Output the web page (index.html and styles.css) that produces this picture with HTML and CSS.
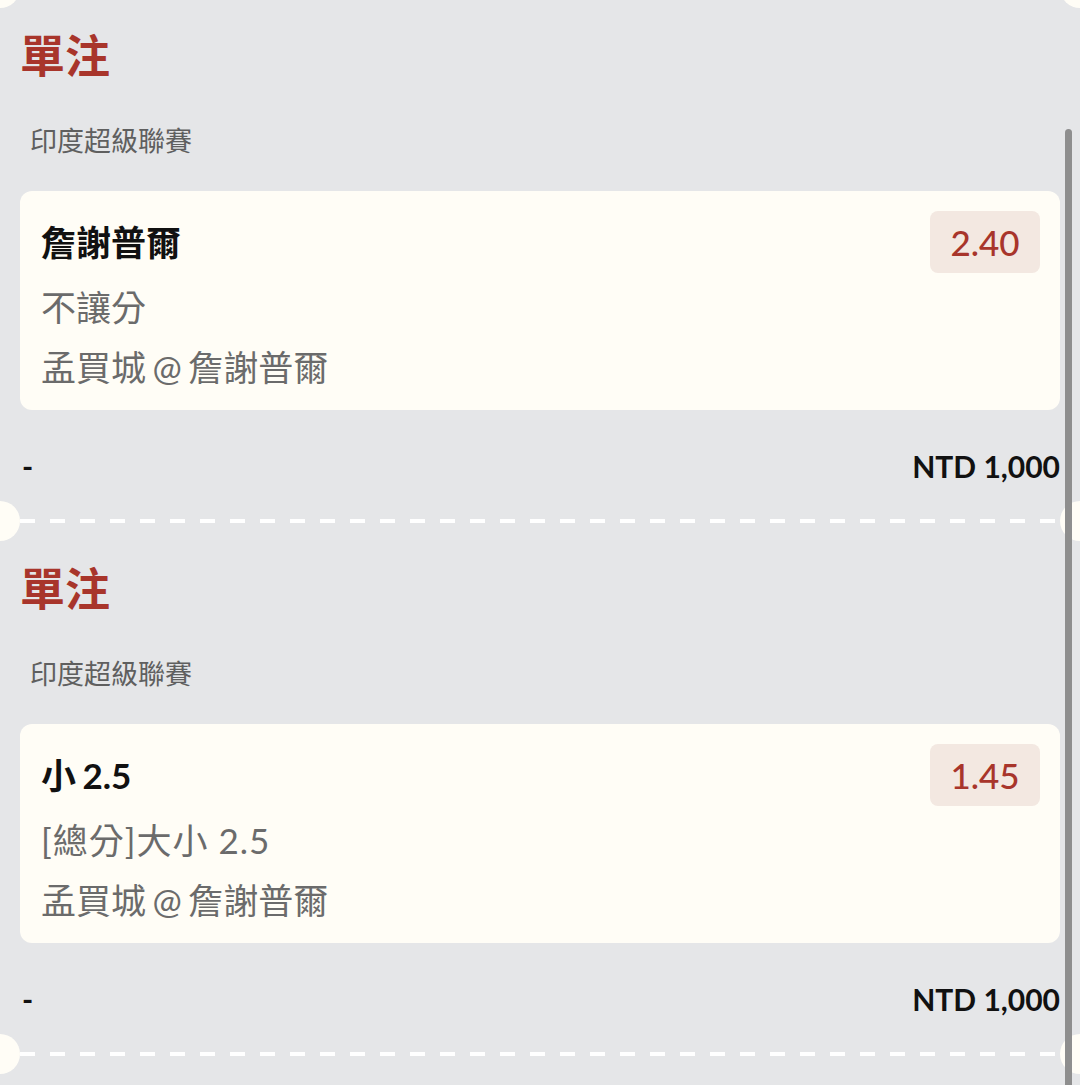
FILE: index.html
```html
<!DOCTYPE html>
<html lang="zh-Hant">
<head>
<meta charset="utf-8">
<title>單注</title>
<link rel="stylesheet" href="styles.css">
</head>
<body>
<main class="list">
  <section class="bet">
    <div class="sep"><div class="sep-line"></div></div>
    <div class="bet-body">
      <h2 class="bet-type">單注</h2>
      <div class="league">印度超級聯賽</div>
      <div class="card">
        <div class="card-head">
          <div class="pick">詹謝普爾</div>
          <div class="odds">2.40</div>
        </div>
        <div class="line">不讓分</div>
        <div class="line teams">孟買城 @ 詹謝普爾</div>
      </div>
      <div class="footer">
        <span class="dash">-</span>
        <span class="stake">NTD 1,000</span>
      </div>
    </div>
  </section>
  <section class="bet">
    <div class="sep"><div class="sep-line"></div></div>
    <div class="bet-body">
      <h2 class="bet-type">單注</h2>
      <div class="league">印度超級聯賽</div>
      <div class="card">
        <div class="card-head">
          <div class="pick">小 2.5</div>
          <div class="odds">1.45</div>
        </div>
        <div class="line market">[總分]大小 2.5</div>
        <div class="line teams">孟買城 @ 詹謝普爾</div>
      </div>
      <div class="footer">
        <span class="dash">-</span>
        <span class="stake">NTD 1,000</span>
      </div>
    </div>
  </section>
  <section class="bet">
    <div class="sep"><div class="sep-line"></div></div>
  </section>
</main>
<div class="scrollbar"></div>
</body>
</html>
```

FILE: styles.css
```css
html, body {
  margin: 0;
  padding: 0;
}
body {
  background: #e5e6e8;
  height: 1085px;
  overflow: hidden;
  font-family: Lato, "Noto Sans CJK TC", sans-serif;
  color: #111;
}
.list {
  margin-top: -14px;
}
.sep {
  position: relative;
  height: 4px;
}
.sep-line {
  height: 4px;
  margin: 0 20px;
  background: repeating-linear-gradient(to right, #ffffff 0 15px, transparent 15px 30px);
}
.sep::before,
.sep::after {
  content: "";
  position: absolute;
  top: -18px;
  width: 40px;
  height: 40px;
  border-radius: 50%;
  background: #fffdf6;
}
.sep::before { left: -20px; }
.sep::after { right: -20px; }

.bet-body {
  padding: 0 20px 33px;
}
.bet-type {
  margin: 36px 0 0;
  font-family: "Noto Sans CJK TC", sans-serif;
  font-size: 45px;
  line-height: 56px;
  font-weight: 700;
  color: #a8352b;
}
.league {
  margin-top: 40px;
  padding-left: 10px;
  font-family: "Noto Sans CJK TC", sans-serif;
  font-size: 27px;
  line-height: 36px;
  color: #5f5f5f;
}
.card {
  margin-top: 33px;
  background: #fffdf6;
  border-radius: 12px;
  padding: 20px 20px 13px 21px;
}
.card-head {
  display: flex;
  align-items: center;
  justify-content: space-between;
  height: 62px;
}
.pick {
  font-size: 35px;
  font-weight: 700;
  line-height: 60px;
  color: #111;
  word-spacing: -2px;
}
.odds {
  width: 110px;
  height: 62px;
  border-radius: 8px;
  background: #f3e8e1;
  color: #a8352b;
  font-size: 35px;
  font-weight: 500;
  line-height: 62px;
  text-align: center;
}
.line {
  font-size: 35px;
  line-height: 60px;
  color: #6b6b6b;
}
.market {
  letter-spacing: 1px;
}
.teams {
  word-spacing: -2.5px;
}
.card-head + .line {
  margin-top: 4px;
}
.footer {
  margin-top: 36px;
  display: flex;
  justify-content: space-between;
  align-items: center;
  height: 40px;
  font-size: 30px;
  font-weight: 700;
  color: #111;
}
.dash {
  padding-left: 2px;
}
.scrollbar {
  position: fixed;
  left: 1065px;
  top: 129px;
  bottom: 0;
  width: 7px;
  border-radius: 4px 4px 0 0;
  background: #8e8e8e;
}
```
